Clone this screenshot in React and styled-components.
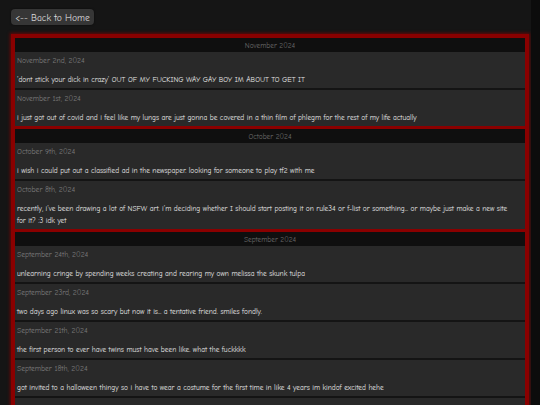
import React from "react";
import styled, { createGlobalStyle } from "styled-components";

const GlobalStyle = createGlobalStyle`
  html {
    background: #0c0c0c;
    overflow: hidden;
  }
  body {
    margin: 0 9px 0 0;
    background: #151515;
    min-height: 405px;
    font-family: "Comic Sans MS", "Comic Neue", Lato, "Noto Sans", sans-serif;
  }
`;

const Page = styled.div`
  padding: 9px 2px 0 11px;
  display: flex;
  flex-direction: column;
  align-items: stretch;
  gap: 9px;
`;

const BackButton = styled.a`
  align-self: flex-start;
  display: inline-flex;
  align-items: center;
  justify-content: center;
  width: 83px;
  height: 16px;
  box-sizing: border-box;
  background: #363636;
  color: #dcdcdc;
  border-radius: 4px;
  font-size: 9.6px;
  text-decoration: none;
  box-shadow: 0 0 2px rgba(0, 0, 0, 0.6);
  cursor: pointer;
`;

const Journal = styled.div`
  display: flex;
  flex-direction: column;
  gap: 3px;
  padding: 4px;
  background: #8a0000;
  box-shadow: 0 0 3px 1px rgba(140, 0, 0, 0.7);
`;

const MonthSection = styled.section`
  display: flex;
  flex-direction: column;
  background: #292929;
`;

const MonthHeader = styled.div`
  height: 14px;
  line-height: 16px;
  overflow: hidden;
  background: #0f0f0f;
  color: #6c6c6c;
  font-size: 7.4px;
  text-align: center;
`;

const Entry = styled.article`
  box-sizing: border-box;
  padding: 3px 8px 2px 2px;
  background: #292929;
  border-bottom: ${(p) => (p.$last ? "none" : "2px solid #141414")};
  min-height: ${(p) => (p.$last ? 36 : 38)}px;
`;

const EntryDate = styled.div`
  height: 12px;
  line-height: 12px;
  color: #7c7c7c;
  font-size: 7.6px;
`;

const EntryText = styled.p`
  margin: 7px 0 0;
  line-height: 12px;
  color: #e8e8e8;
  font-size: 7.4px;
`;

const months = [
  {
    name: "November 2024",
    entries: [
      {
        date: "November 2nd, 2024",
        text: "'dont stick your dick in crazy' OUT OF MY FUCKING WAY GAY BOY IM ABOUT TO GET IT",
      },
      {
        date: "November 1st, 2024",
        text: "i just got out of covid and i feel like my lungs are just gonna be covered in a thin film of phlegm for the rest of my life actually",
      },
    ],
  },
  {
    name: "October 2024",
    entries: [
      {
        date: "October 9th, 2024",
        text: "i wish i could put out a classified ad in the newspaper. looking for someone to play tf2 with me",
      },
      {
        date: "October 8th, 2024",
        text: "recently, i've been drawing a lot of NSFW art. i'm deciding whether I should start posting it on rule34 or f-list or something... or maybe just make a new site for it? :3 idk yet",
      },
    ],
  },
  {
    name: "September 2024",
    entries: [
      {
        date: "September 24th, 2024",
        text: "unlearning cringe by spending weeks creating and rearing my own melissa the skunk tulpa",
      },
      {
        date: "September 23rd, 2024",
        text: "two days ago linux was so scary but now it is... a tentative friend. smiles fondly.",
      },
      {
        date: "September 21th, 2024",
        text: "the first person to ever have twins must have been like. what the fuckkkk",
      },
      {
        date: "September 18th, 2024",
        text: "got invited to a halloween thingy so i have to wear a costume for the first time in like 4 years im kindof excited hehe",
      },
      {
        date: "",
        text: "",
      },
    ],
  },
];

export default function App() {
  return (
    <>
      <GlobalStyle />
      <Page>
        <BackButton>{"<-- Back to Home"}</BackButton>
        <Journal>
          {months.map((m) => (
            <MonthSection key={m.name}>
              <MonthHeader>{m.name}</MonthHeader>
              {m.entries.map((e, i) => (
                <Entry key={i} $last={i === m.entries.length - 1}>
                  <EntryDate>{e.date}</EntryDate>
                  <EntryText>{e.text}</EntryText>
                </Entry>
              ))}
            </MonthSection>
          ))}
        </Journal>
      </Page>
    </>
  );
}
